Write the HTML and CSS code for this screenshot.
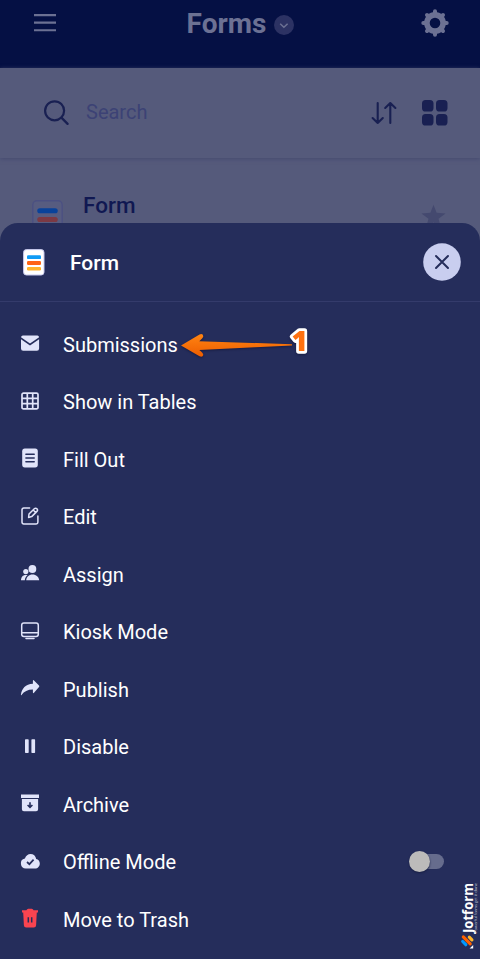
FILE: index.html
```html
<!DOCTYPE html>
<html lang="en">
<head>
<meta charset="utf-8">
<meta name="viewport" content="width=device-width">
<title>Forms</title>
<link rel="stylesheet" href="styles.css">
</head>
<body>
<div class="app">
  <header class="topbar">
    <svg class="menu-icon" viewBox="0 0 22 18"><path d="M0 1.100h22M0 8.600h22M0 16.200h22" fill="none" stroke="currentColor" stroke-width="2.100"/></svg>
    <div class="heading">
      <h1>Forms</h1>
      <svg class="chevron" viewBox="0 0 20 20"><circle cx="10" cy="10" r="10" fill="#2c3263"/><path d="M6.200 8.800l3.700 3.500 3.700-3.500" fill="none" stroke="#6c7193" stroke-width="1.500"/></svg>
    </div>
    <svg class="gear" viewBox="0 0 28 28"><g fill="none" stroke="currentColor"><circle cx="14" cy="14" r="8.100" stroke-width="5.600"/><path d="M14 5V2.300M14 23v2.700M5 14H2.300M23 14h2.700M7.600 7.600L6 6M20.400 7.600L22 6M7.600 20.400L6 22M20.400 20.400L22 22" stroke-width="4" stroke-linecap="round"/></g></svg>
  </header>
  <div class="searchbar">
    <svg class="search-icon" viewBox="0 0 26 26"><circle cx="10.600" cy="10.800" r="9.500" fill="none" stroke="currentColor" stroke-width="2.200"/><path d="M17.400 17.600l6.200 6.300" stroke="currentColor" stroke-width="2.300" stroke-linecap="round"/></svg>
    <span class="placeholder">Search</span>
    <svg class="sort" viewBox="0 0 26 24"><path d="M6.700 2v20M1.600 17l5.100 5 5.100-5M19.300 22V2M14.200 7l5.100-5 5.100 5" fill="none" stroke="currentColor" stroke-width="2.100" stroke-linecap="round" stroke-linejoin="round"/></svg>
    <svg class="grid-icon" viewBox="0 0 26 26"><g fill="currentColor"><rect width="11.500" height="11.500" rx="3.600"/><rect x="14" width="11.500" height="11.500" rx="3.600"/><rect y="14" width="11.500" height="11.500" rx="3.600"/><rect x="14" y="14" width="11.500" height="11.500" rx="3.600"/></g></svg>
  </div>
  <main class="list">
    <svg class="form-card" viewBox="0 0 30 38"><rect x=".7" y=".7" width="28.600" height="36.600" rx="4" fill="#575c80" stroke="#4b5082" stroke-width="1.300"/><rect x="5" y="8" width="20" height="5" rx="2.500" fill="#09429a"/><rect x="5" y="16.500" width="20" height="5" rx="2.500" fill="#7b3944"/></svg>
    <span class="form-name">Form</span>
    <svg class="star" viewBox="0 0 24 24"><path d="M12 .8l3 7.700 8.600.5-6.800 5.100 2.300 8.100L12 17.800l-7.100 4.400 2.300-8.100L.4 9 9 8.500z" fill="currentColor"/></svg>
  </main>
</div>

<section class="sheet">
  <div class="sheet-head">
    <svg class="sheet-form" viewBox="0 0 22 27"><rect x=".6" y=".6" width="20.400" height="25.400" rx="2.800" fill="#fff" stroke="#c8c9ee"/><rect x="4" y="6.300" width="14" height="3.800" rx="1.200" fill="#0f9bf5"/><rect x="4" y="12.100" width="14" height="3.800" rx="1.200" fill="#ff6415"/><rect x="4" y="17.900" width="14" height="3.600" rx="1.200" fill="#ffb32b"/></svg>
    <h2>Form</h2>
    <svg class="close" viewBox="0 0 38 38"><circle cx="19" cy="19" r="18.800" fill="#c9ceef"/><path d="M13 13l12 12M25 13L13 25" stroke="#252d5b" stroke-width="2" stroke-linecap="round"/></svg>
  </div>
  <ul class="actions">
    <li><svg viewBox="0 0 22 22"><path fill="currentColor" d="M4 3.500h14.400a2 2 0 0 1 1.700 1.700L11 11.400 2 5.200a2 2 0 0 1 2-1.700ZM2 7.200l9 6.300 9.100-6.300v9.300a2.200 2.200 0 0 1-2.200 2.200H4.200A2.200 2.200 0 0 1 2 16.500Z"/></svg><span>Submissions</span></li>
    <li><svg viewBox="0 0 22 22"><path d="M4.500 3.100h13a1.500 1.500 0 0 1 1.500 1.500v12.800a1.500 1.500 0 0 1-1.500 1.500h-13A1.500 1.500 0 0 1 3 17.400V4.600A1.500 1.500 0 0 1 4.500 3.100ZM8.300 3v16M13.700 3v16M3 8.300h16M3 13.700h16" fill="none" stroke="currentColor" stroke-width="1.700"/></svg><span>Show in Tables</span></li>
    <li><svg viewBox="0 0 22 22"><rect x="3.200" y="1.600" width="15.600" height="18.800" rx="2.600" fill="currentColor"/><path d="M6.900 7.200h8.300M6.900 11h8.300M6.900 14.800h8.300" stroke="#252d5b" stroke-width="1.500" stroke-linecap="round"/></svg><span>Fill Out</span></li>
    <li><svg viewBox="0 0 22 22"><g fill="none" stroke="currentColor" stroke-width="1.500" stroke-linecap="round" stroke-linejoin="round"><path d="M10.600 3.100H4.700A1.700 1.700 0 0 0 3 4.800v12.400a1.700 1.700 0 0 0 1.700 1.700h12.500a1.700 1.700 0 0 0 1.700-1.700v-6.100"/><path d="M10 9l5.300-5.200a1.800 1.800 0 0 1 2.600 2.600L12.700 11.600 9.600 12.400ZM14.200 5l2.600 2.600"/></g></svg><span>Edit</span></li>
    <li><svg viewBox="0 0 22 22"><g fill="currentColor"><circle cx="13.400" cy="7" r="3.900"/><circle cx="6.800" cy="9.600" r="2.600"/><path d="M7.200 18.300c.2-3.500 2.700-5.900 6.300-5.900s6.500 2.400 6.700 5.900ZM2 18.300c.1-3.100 1.800-5.300 4.700-5.300.7 0 1.300.1 1.800.3-1.700 1.200-2.500 2.800-2.700 5Z"/></g></svg><span>Assign</span></li>
    <li><svg viewBox="0 0 22 22"><g fill="none" stroke="currentColor" stroke-width="1.500"><rect x="2.700" y="3.100" width="16.600" height="13.300" rx="2.200"/><path d="M3 12.700h16M7 18.600h8" stroke-linecap="round"/></g></svg><span>Kiosk Mode</span></li>
    <li><svg viewBox="0 0 22 22"><path fill="currentColor" d="M13.900 3.900q0-1.500 1.100-.5l5 5.200q.7.700 0 1.400L15 15.800q-1.100 1-1.100-.5v-2.700C8.600 12.600 5.200 14.500 2.500 18c-.3.400-.7.300-.6-.2C2.700 11.500 6.500 7 13.900 6.700Z"/></svg><span>Publish</span></li>
    <li><svg viewBox="0 0 22 22"><rect x="6" y="4.200" width="3.700" height="13.800" rx=".7" fill="currentColor"/><rect x="12.400" y="4.200" width="3.700" height="13.800" rx=".7" fill="currentColor"/></svg><span>Disable</span></li>
    <li><svg viewBox="0 0 22 22"><path fill="currentColor" d="M2 2.500h18v3.400H2ZM2.900 7h16.200v10.300a2 2 0 0 1-2 2H4.900a2 2 0 0 1-2-2Z"/><path d="M11 10.200v5M8.600 13l2.400 2.400 2.400-2.400" fill="none" stroke="#252d5b" stroke-width="1.600"/></svg><span>Archive</span></li>
    <li><svg viewBox="0 0 22 22"><path fill="currentColor" d="M7 18.500A5 5 0 0 1 5.900 8.600C7 5.600 9 4 11.500 4c3 0 5.200 2 5.700 4.900 2.200.5 3.600 2.200 3.600 4.600 0 2.900-2 5-4.800 5Z"/><path d="M8 12l2.400 2.200 4.200-4.500" fill="none" stroke="#252d5b" stroke-width="1.700"/></svg><span>Offline Mode</span><i class="switch"></i></li>
    <li class="danger"><svg viewBox="0 0 22 22"><path fill="currentColor" d="M3 3.200h4.400Q8 1.700 9.300 1.700h3.400q1.300 0 1.900 1.500H19v2.400H3ZM4.200 5.500h13.600l-.7 12.700a2.300 2.300 0 0 1-2.300 2.200H7.200a2.300 2.300 0 0 1-2.300-2.200Z"/><path d="M9.300 10.300v5.200M12.700 10.300v5.200" stroke="#252d5b" stroke-width="1.500"/></svg><span>Move to Trash</span></li>
  </ul>
</section>

<svg class="pointer" viewBox="0 0 140 46">
  <defs><linearGradient id="arrow" x1="0" y1="0" x2="0" y2="1"><stop offset="0" stop-color="#ff8412"/><stop offset="1" stop-color="#ee5d00"/></linearGradient></defs>
  <path class="arrow" fill="url(#arrow)" d="M1 25.500L19.500 14.500Q23 13.200 23.300 16.300 23.300 17.800 19.300 21.200L112 24.200V25.600L19.300 30Q23.400 33.200 23.300 35 22.600 37.600 19.500 36.300Z"/>
  <text class="step" x="111.500" y="31.300">1</text>
</svg>
<svg class="brand" viewBox="0 0 22 72">
  <g stroke-width="3.200" stroke-linecap="round"><path d="M3.700 61.500l3.100 3.200" stroke="#0099ff"/><path d="M4.300 56.900l6.900 7" stroke="#ff6100"/><path d="M10.300 57.200l2.600 2.600" stroke="#ffb629"/></g><path d="M14.200 65v3.600h-3.600Z" fill="#fff"/>
  <text class="brand-name" transform="translate(14 53) rotate(-90)" textLength="50" lengthAdjust="spacingAndGlyphs">Jotform</text>
  <text class="brand-line" transform="translate(17.800 53) rotate(-90)" textLength="50" lengthAdjust="spacingAndGlyphs">Powerful forms get it done</text>
</svg>
</body>
</html>
```

FILE: styles.css
```css
* { box-sizing: border-box; }
body {
  margin: 0;
  width: 480px;
  height: 959px;
  overflow: hidden;
  position: relative;
  background: #555a7b;
  font-family: Roboto, "Liberation Sans", sans-serif;
}
svg { display: block; flex: none; overflow: visible; }
h1, h2, ul { margin: 0; padding: 0; }

.app { height: 240px; }
.topbar {
  height: 68px;
  display: flex;
  align-items: flex-start;
  justify-content: space-between;
  padding: 9px 31px 0 34px;
  background: #051044;
  color: #6c7193;
}
.menu-icon { width: 22px; height: 18px; margin-top: 5px; }
.heading { display: flex; gap: 8px; margin-left: 4px; }
h1 { font-size: 28px; line-height: 30px; font-weight: 700; }
.chevron { width: 20px; height: 20px; margin-top: 6px; }
.gear { width: 28px; height: 28px; }
.searchbar {
  height: 90px;
  display: flex;
  align-items: center;
  padding: 0 32px 0 44px;
  color: #192052;
  background: #555a7b;
  box-shadow: 0 1px 4px #454a70;
  position: relative;
}
.search-icon { width: 26px; height: 26px; }
.placeholder { margin: -2px 0 0 16px; flex: 1; font-size: 20px; line-height: 24px; color: #3c4275; }
.sort { width: 26px; height: 24px; margin-right: 25px; }
.grid-icon { width: 26px; height: 26px; }
.list { display: flex; align-items: flex-start; padding: 32px 34px 0 32px; }
.form-card { width: 31px; height: 39px; margin-top: 10px; }
.form-name { margin: 1px 0 0 20px; flex: 1; font-size: 22.5px; line-height: 28px; font-weight: 500; color: #101852; }
.star { width: 25px; height: 25px; margin-top: 14px; color: #44496f; }

.sheet {
  position: absolute;
  inset: 223px 0 0;
  border-radius: 18px 18px 0 0;
  background: #252d5b;
  color: #fff;
}
.sheet-head {
  height: 79px;
  display: flex;
  align-items: center;
  padding: 0 19.5px 0 23px;
  border-bottom: 1px solid #343b6b;
}
.sheet-form { width: 22px; height: 27px; }
h2 { flex: 1; margin: 2px 0 0 25px; font-size: 21px; line-height: 24px; font-weight: 500; }
.close { width: 38px; height: 38px; }
.actions { list-style: none; padding: 13px 36px 0 19px; }
.actions li { height: 57.5px; display: flex; align-items: center; font-size: 20px; line-height: 24px; }
.actions li > svg { width: 22px; height: 22px; margin: -1px 22px 0 0; color: #e1e4fa; }
.actions span { flex: 1; margin-top: 2px; }
.actions .danger > svg { color: #f94450; }
.switch {
  width: 30px;
  height: 15px;
  border-radius: 8px;
  background: #666c8d;
  position: relative;
}
.switch::before {
  content: "";
  position: absolute;
  left: -5px;
  top: -3px;
  width: 21px;
  height: 21px;
  border-radius: 50%;
  background: #bcbbba;
  box-shadow: 0 1px 2px #171e43;
}
.pointer { position: absolute; left: 180px; top: 320px; width: 140px; height: 46px; }
.arrow { filter: drop-shadow(0 1px 1px #171c42); }
.step {
  font: 800 28px "Open Sans", sans-serif;
  fill: #ff7110;
  stroke: #fff;
  stroke-width: 5.5px;
  stroke-linejoin: round;
  paint-order: stroke;
  filter: drop-shadow(0 1px 1px #171c42);
}
.brand { position: absolute; left: 459px; top: 880px; width: 22px; height: 72px; }
.brand-name { font: 700 14px "Open Sans", sans-serif; fill: #fff; }
.brand-line { font: 400 4px "Open Sans", sans-serif; fill: #bdc0d0; }
```
